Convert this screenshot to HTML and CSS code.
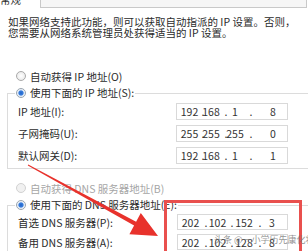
FILE: index.html
```html
<!DOCTYPE html>
<html lang="zh-CN">
<head>
    <meta charset="UTF-8">
    <title>Internet 协议版本 4 (TCP/IPv4) 属性</title>
    <link rel="stylesheet" href="styles.css">
</head>
<body>

    <!-- 选项卡 -->
    <div class="tabs">
        <span class="tab-label">常规</span>
        <div class="tab-strip"></div>
    </div>

    <p class="desc">如果网络支持此功能，则可以获取自动指派的 IP 设置。否则，<br>您需要从网络系统管理员处获得适当的 IP 设置。</p>

    <!-- IP 地址 -->
    <div class="radio-row first"><span class="radio"></span>自动获得 IP 地址(O)</div>

    <div class="group">
        <div class="legend"><span class="radio checked"></span>使用下面的 IP 地址(S):</div>
        <div class="field-row">
            <span class="label">IP 地址(I):</span>
            <div class="ipbox"><span>192</span><span>.</span><span>168</span><span>.</span><span>1</span><span>.</span><span>8</span></div>
        </div>
        <div class="field-row">
            <span class="label">子网掩码(U):</span>
            <div class="ipbox"><span>255</span><span>.</span><span>255</span><span>.</span><span>255</span><span>.</span><span>0</span></div>
        </div>
        <div class="field-row">
            <span class="label">默认网关(D):</span>
            <div class="ipbox"><span>192</span><span>.</span><span>168</span><span>.</span><span>1</span><span>.</span><span>1</span></div>
        </div>
    </div>

    <!-- DNS -->
    <div class="radio-row disabled"><span class="radio"></span>自动获得 DNS 服务器地址(B)</div>

    <div class="group dns">
        <div class="legend"><span class="radio checked"></span>使用下面的 DNS 服务器地址(E):</div>
        <div class="field-row">
            <span class="label">首选 DNS 服务器(P):</span>
            <div class="ipbox"><span>202</span><span>.</span><span>102</span><span>.</span><span>152</span><span>.</span><span>3</span></div>
        </div>
        <div class="field-row">
            <span class="label">备用 DNS 服务器(A):</span>
            <div class="ipbox"><span>202</span><span>.</span><span>102</span><span>.</span><span>128</span><span>.</span><span>8</span></div>
        </div>
    </div>

    <!-- 标注 -->
    <div class="mark-box"></div>
    <svg class="mark-arrow" width="308" height="251" viewBox="0 0 308 251">
        <polygon points="28.2,164.6 136.1,221.8 140.8,213.1 158,236 129.4,234.3 134.1,225.6 27.8,165.4" fill="#e8322c"/>
    </svg>
    <div class="watermark">头条 @一小学历先康化妆</div>

</body>
</html>
```

FILE: styles.css
```css
body {
    margin: 0;
    width: 308px;
    height: 251px;
    overflow: hidden;
    position: relative;
    background-color: #fff;
    color: #2b2b2b;
    font-family: "Noto Sans CJK SC", sans-serif;
    font-size: 10.5px;
}
.tabs {
    display: flex;
    height: 8px;
    overflow: hidden;
}
.tab-label {
    width: 40px;
    margin-top: -6px;
    line-height: 11px;
}
.tab-strip {
    width: 265px;
    height: 7px;
    border: 1px solid #c9c9c9;
    border-top: none;
    background-color: #f6f6f6;
}
.desc {
    margin: 9px 0 0 8px;
    line-height: 10.5px;
    white-space: nowrap;
}
.radio-row {
    display: flex;
    align-items: center;
    gap: 4px;
    height: 11px;
    margin: 13.5px 0 0 16px;
    white-space: nowrap;
}
.radio-row.first {
    margin-top: 32.5px;
}
.radio-row.disabled {
    color: #a6a6a6;
}
.radio {
    flex: none;
    width: 10px;
    height: 10px;
    box-sizing: border-box;
    border-radius: 50%;
    border: 1px solid #a9a9a9;
    background: radial-gradient(circle, #fff 0, #e4e4e4 100%);
}
.radio-row.disabled .radio {
    border-color: #d2d2d2;
    background: #f1f1f1;
}
.radio.checked {
    border-color: #9aa4ae;
    background: radial-gradient(circle, #1f63c9 0, #3b7fde 2.2px, #dbe7f5 3px, #fff 4.5px);
}
.group {
    margin: 11.5px -10px 0 7px;
    border: 1px solid #dcdcdc;
    padding-bottom: 4px;
}
.legend {
    display: flex;
    align-items: center;
    gap: 4px;
    width: fit-content;
    height: 11px;
    margin: -7px 0 0 7px;
    padding: 0 1px;
    background-color: #fff;
    white-space: nowrap;
}
.field-row {
    display: flex;
    align-items: center;
    height: 17px;
    margin-top: 5px;
    padding-left: 10px;
}
.label {
    width: 158px;
    flex: none;
    white-space: nowrap;
}
.ipbox {
    width: 112px;
    height: 17px;
    box-sizing: border-box;
    border: 1px solid #d9d9d9;
    display: grid;
    grid-template-columns: 25px 2px 14px 16px 2px 30px 14px;
    align-items: center;
    color: #333;
}
.ipbox span {
    display: flex;
    justify-content: center;
    white-space: nowrap;
}
.dns .field-row {
    height: 16px;
    margin-top: 4px;
}
.dns .field-row:first-of-type {
    margin-top: 6px;
}
.dns .label {
    width: 159px;
}
.dns .ipbox {
    width: 111px;
    height: 16px;
    grid-template-columns: 25px 6px 17px 12px 12px 20px 4px;
}
.mark-box {
    position: absolute;
    left: 164px;
    top: 200px;
    width: 138px;
    height: 70px;
    box-sizing: border-box;
    border: 3px solid #e9504e;
}
.mark-arrow {
    position: absolute;
    left: 0;
    top: 0;
}
.watermark {
    position: absolute;
    left: 214px;
    top: 233px;
    font-size: 9px;
    color: rgba(110, 110, 110, 0.75);
    white-space: nowrap;
}
```
